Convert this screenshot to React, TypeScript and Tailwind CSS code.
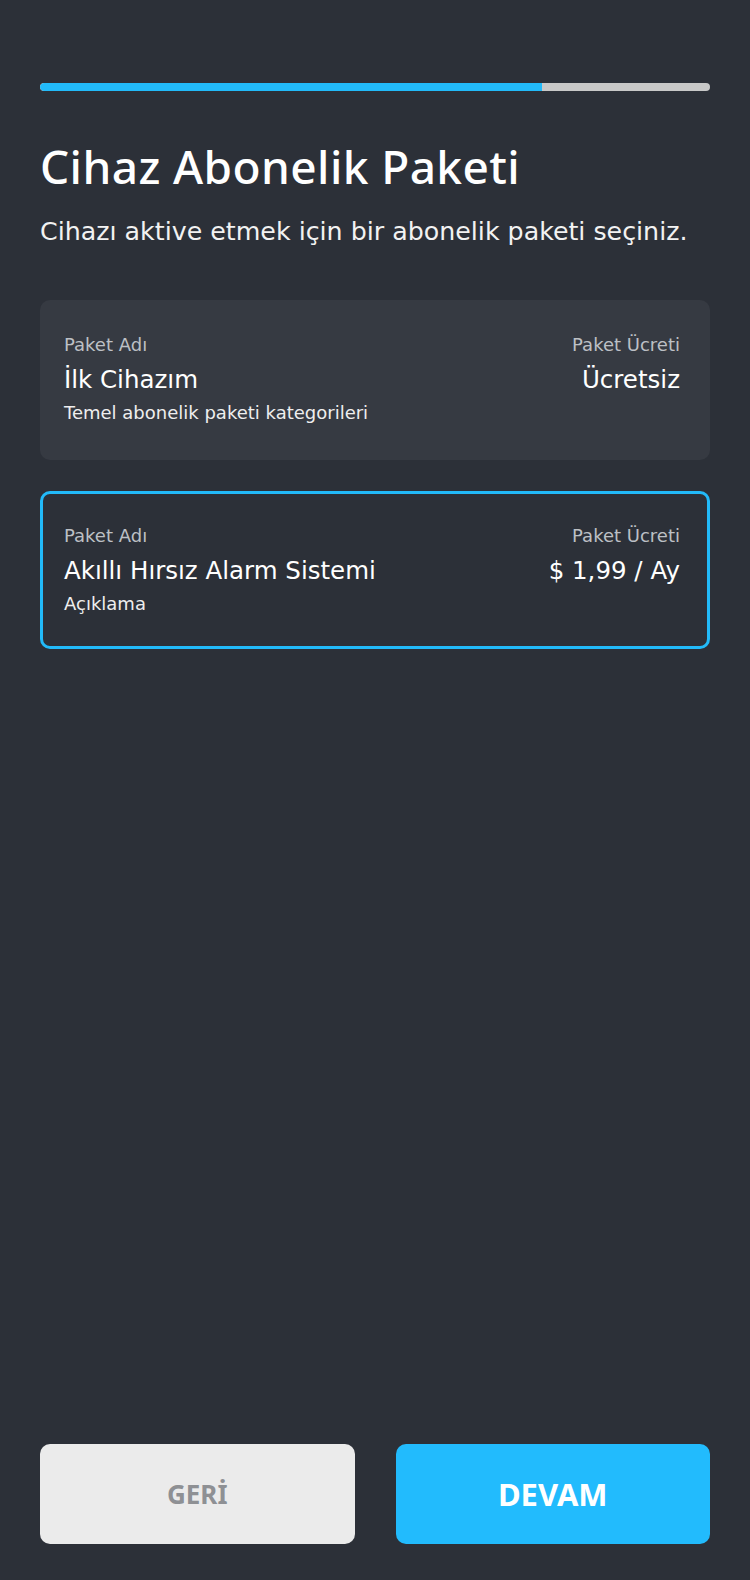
import { useState } from "react";

type Paket = {
  id: number;
  name: string;
  desc: string;
  price: string;
};

const paketler: Paket[] = [
  { id: 1, name: "İlk Cihazım", desc: "Temel abonelik paketi kategorileri", price: "Ücretsiz" },
  { id: 2, name: "Akıllı Hırsız Alarm Sistemi", desc: "Açıklama", price: "$ 1,99 / Ay" },
];

export default function App() {
  const [selected, setSelected] = useState<number>(2);

  return (
    <main
      className="w-[750px] h-[1580px] bg-[#2c3038] flex flex-col px-10 pb-9 text-white"
      style={{ fontFamily: '"DejaVu Sans", "Noto Sans", sans-serif' }}
    >
      {/* progress */}
      <div className="mt-[83px] h-2 w-full rounded-full bg-[#c8c8c8] overflow-hidden flex">
        <div className="h-full w-[502px] bg-[#22baf9] rounded-l-full" />
      </div>

      <h1 className="mt-[46px] text-[46px] leading-[58px] font-medium tracking-[0.4px] font-['Noto_Sans',sans-serif]">
        Cihaz Abonelik Paketi
      </h1>
      <p className="mt-[21px] text-[25.3px] leading-8 text-[#f2f2f2]">
        Cihazı aktive etmek için bir abonelik paketi seçiniz.
      </p>

      <div className="mt-[52px] flex flex-col gap-[31px]">
        {paketler.map((p) => {
          const active = selected === p.id;
          return (
            <button
              key={p.id}
              onClick={() => setSelected(p.id)}
              className={
                active
                  ? "h-[158px] w-full rounded-[10px] border-[3px] border-[#22baf9] bg-[#2c3038] pl-[21px] pr-[27px] pt-[30px] text-left flex justify-between"
                  : "h-[160px] w-full rounded-[10px] bg-[#363a42] pl-6 pr-[30px] pt-[33px] text-left flex justify-between"
              }
            >
              <div className="flex flex-col">
                <span className="text-[18px] leading-6 text-[#bdc0c5]">Paket Adı</span>
                <span className="mt-[7px] text-[24.5px] leading-8 text-white">{p.name}</span>
                <span className="mt-[5px] text-[18px] leading-6 text-[#eeeeee]">{p.desc}</span>
              </div>
              <div className="flex flex-col items-end">
                <span className="text-[18px] leading-6 text-[#bdc0c5]">Paket Ücreti</span>
                <span className="mt-[7px] text-[24.5px] leading-8 text-white">{p.price}</span>
              </div>
            </button>
          );
        })}
      </div>

      <div className="mt-auto flex gap-[41px] font-['Noto_Sans',sans-serif]">
        <button className="flex-1 h-[100px] rounded-[10px] bg-[#ebebeb] text-[#8e9094] text-[26px] font-bold">
          GERİ
        </button>
        <button className="flex-1 h-[100px] rounded-[10px] bg-[#22bbfd] text-white text-[31px] font-bold">
          DEVAM
        </button>
      </div>
    </main>
  );
}
